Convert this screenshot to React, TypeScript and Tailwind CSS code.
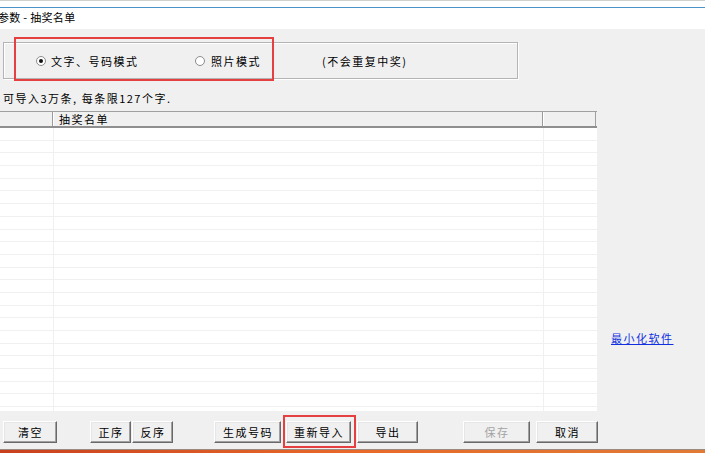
import React from "react";

function Radio({ checked }: { checked?: boolean }) {
  return (
    <div className="w-[10px] h-[10px] rounded-full bg-white border border-[#8c8c8c] flex items-center justify-center shrink-0">
      {checked ? <div className="w-[4px] h-[4px] rounded-full bg-[#111]" /> : null}
    </div>
  );
}

function Btn({ label, cls, disabled }: { label: string; cls: string; disabled?: boolean }) {
  return (
    <div
      className={
        "h-[22px] shrink-0 flex items-center justify-center bg-[#f0f0f0] border border-t-white border-l-white border-r-[#696969] border-b-[#696969] shadow-[inset_-1px_-1px_0_#a0a0a0,inset_1px_1px_0_#e6e6e6] leading-[14px] " +
        (disabled ? "text-[#a3a3a3] " : "text-black ") +
        cls
      }
    >
      <span className="pl-[1px]">{label}</span>
    </div>
  );
}

export default function App() {
  const rows = Array.from({ length: 24 }, (_, i) => i);
  return (
    <div className="w-[705px] h-[453px] overflow-hidden bg-[#f0f0f0] flex flex-col text-[11px] tracking-[1.5px] text-black font-['Noto_Sans_CJK_SC','Noto_Sans',sans-serif]">
      {/* top window edge */}
      <div className="h-px bg-[#d0d0d0] shrink-0" />
      <div className="h-[6px] bg-white shrink-0" />
      <div className="h-px bg-[#4a94c9] shrink-0" />
      <div className="h-[21px] bg-white shrink-0 pt-[2px] leading-[14px]">
        <span className="-ml-[2px] tracking-[0.3px]">参数 - 抽奖名单</span>
      </div>

      {/* group box */}
      <div className="mt-[13px] ml-[3px] w-[515px] h-[37px] shrink-0 relative border border-[#b4b4b4] shadow-[inset_1px_1px_0_#fff,1px_1px_0_#fff] flex items-center pl-[32px] leading-[14px]">
        <div className="w-[159px] flex items-center">
          <Radio checked />
          <span className="ml-[5px]">文字、号码模式</span>
        </div>
        <div className="w-[127px] flex items-center">
          <Radio />
          <span className="ml-[6px]">照片模式</span>
        </div>
        <span>(不会重复中奖)</span>
        <div className="absolute left-[10px] top-[-6px] w-[260px] h-[44px] border-2 border-[#e5403f] pointer-events-none" />
      </div>

      <div className="mt-[12px] pl-[3px] leading-[14px] shrink-0">可导入3万条, 每条限127个字.</div>

      {/* table + side link */}
      <div className="mt-[6px] h-[300px] flex shrink-0">
        <div className="w-[597px] h-[300px] flex flex-col">
          <div className="h-[17px] shrink-0 flex border-t border-[#a0a0a0] border-b-2 border-b-[#8f8f8f] bg-[#f0f0f0] leading-[14px]">
            <div className="w-[53px] border-r border-[#9a9a9a]" />
            <div className="w-[490px] border-r border-[#9a9a9a] shadow-[inset_1px_0_0_#fff] pl-[6px]">抽奖名单</div>
            <div className="w-[53px] border-r border-[#a0a0a0] shadow-[inset_1px_0_0_#fff]" />
          </div>
          <div className="flex-1 overflow-hidden bg-white">
            {rows.map((r) => (
              <div key={r} className="h-[12.7px] flex border-b border-[#f0f0f0]">
                <div className="w-[54px] border-r border-[#f0f0f0]" />
                <div className="w-[490px] border-r border-[#f0f0f0]" />
                <div className="flex-1" />
              </div>
            ))}
          </div>
        </div>
        <div className="ml-[14px] pt-[220px] leading-[14px]">
          <span className="text-[#1030e0] underline underline-offset-[1px]">最小化软件</span>
        </div>
      </div>

      {/* buttons */}
      <div className="mt-[10px] h-[22px] flex shrink-0">
        <Btn label="清空" cls="ml-[3px] w-[54px]" />
        <Btn label="正序" cls="ml-[33px] w-[41px]" />
        <Btn label="反序" cls="ml-[1px] w-[41px]" />
        <Btn label="生成号码" cls="ml-[41px] w-[67px]" />
        <div className="ml-[5px] w-[65px] h-[22px] relative shrink-0">
          <Btn label="重新导入" cls="w-[65px]" />
          <div className="absolute left-[-3px] top-[-6px] w-[73px] h-[33px] border-2 border-[#e5403f] pointer-events-none" />
        </div>
        <Btn label="导出" cls="ml-[6px] w-[61px]" />
        <Btn label="保存" cls="ml-[45px] w-[67px]" disabled />
        <Btn label="取消" cls="ml-[6px] w-[62px]" />
      </div>

      <div className="flex-1" />
      <div className="h-px bg-[#9c8a80] shrink-0" />
      <div className="h-[3px] shrink-0 bg-gradient-to-r from-[#c8401e] via-[#e8692a] to-[#e07a34]" />
    </div>
  );
}
